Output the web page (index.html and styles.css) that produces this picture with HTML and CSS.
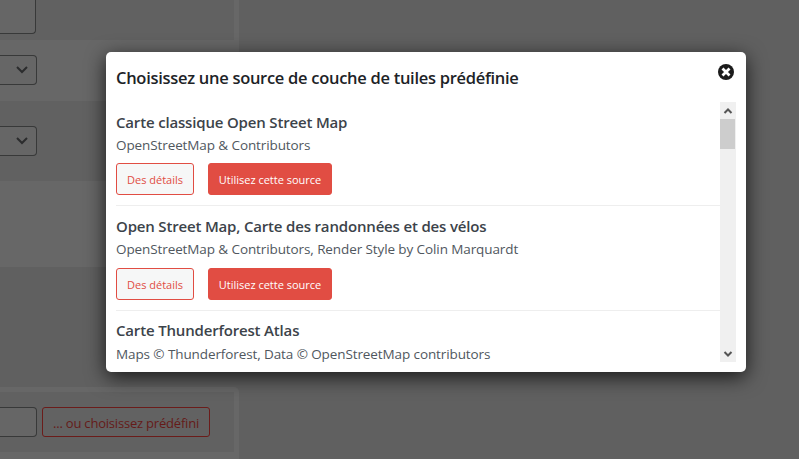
FILE: index.html
```html
<!DOCTYPE html>
<html lang="fr">
<head>
<meta charset="utf-8">
<title>Source de couche de tuiles</title>
<link rel="stylesheet" href="styles.css">
</head>
<body>
<main class="page">
  <section class="card card-fields">
    <div class="row row-first"><div class="field field-text"></div></div>
    <div class="row row-second"><div class="field field-select"><svg class="chevron" viewBox="0 0 12 8"><path d="M1 1l5 5 5-5"/></svg></div></div>
    <div class="row row-third"><div class="field field-select"><svg class="chevron" viewBox="0 0 12 8"><path d="M1 1l5 5 5-5"/></svg></div></div>
    <div class="row row-fourth"></div>
  </section>
  <section class="card card-source">
    <div class="row row-source">
      <div class="field field-source"></div>
      <button class="choose">... ou choisissez prédéfini</button>
    </div>
  </section>
</main>
<div class="modal">
  <header class="modal-head">
    <h1>Choisissez une source de couche de tuiles prédéfinie</h1>
    <svg class="close" viewBox="0 0 16 16"><circle cx="8" cy="8" r="8"/><path d="M4.5 4.5l7 7M11.5 4.5l-7 7"/></svg>
  </header>
  <div class="modal-body">
    <div class="list">
      <article class="item">
        <h2>Carte classique Open Street Map</h2>
        <p>OpenStreetMap &amp; Contributors</p>
        <div class="actions"><button class="btn details">Des détails</button><button class="btn use">Utilisez cette source</button></div>
      </article>
      <article class="item item-second">
        <h2>Open Street Map, Carte des randonnées et des vélos</h2>
        <p>OpenStreetMap &amp; Contributors, Render Style by Colin Marquardt</p>
        <div class="actions"><button class="btn details">Des détails</button><button class="btn use">Utilisez cette source</button></div>
      </article>
      <article class="item item-third">
        <h2>Carte Thunderforest Atlas</h2>
        <p>Maps © Thunderforest, Data © OpenStreetMap contributors</p>
      </article>
    </div>
    <div class="scrollbar">
      <svg class="arrow" viewBox="0 0 16 17"><path d="M4.5 11L8 7.5 11.5 11"/></svg>
      <div class="thumb"></div>
      <svg class="arrow arrow-down" viewBox="0 0 16 17"><path d="M4.5 7L8 10.5 11.5 7"/></svg>
    </div>
  </div>
</div>
</body>
</html>
```
FILE: styles.css
```css
* { box-sizing: border-box; }
body {
  margin: 0;
  height: 459px;
  overflow: hidden;
  background: #606060;
  font-family: "Open Sans", "Noto Sans", sans-serif;
}
h1, h2, p { margin: 0; white-space: nowrap; }
button { font-family: inherit; padding: 0; white-space: nowrap; }

.page { display: flex; flex-direction: column; gap: 120px; }
.card { width: 239px; padding-right: 5px; background: #676767; }
.card-fields { height: 267px; }
.card-source { height: 72px; padding-top: 5px; border-top-right-radius: 5px; }
.row { width: 234px; }
.row-first { height: 40px; background: #616161; }
.row-second { height: 61px; padding-top: 15px; }
.row-third { height: 80px; padding-top: 25px; background: #616161; }
.row-fourth { height: 86px; }
.row-source { display: flex; gap: 5px; height: 60px; padding-top: 15px; background: #616161; }
.field { border: 1px solid #383939; border-left: 0; border-radius: 0 4px 4px 0; background: #666; }
.field-text { width: 36px; height: 34px; border-top: 0; border-top-right-radius: 0; }
.field-select { display: flex; align-items: center; justify-content: flex-end; width: 37px; height: 30px; padding-right: 8px; }
.field-source { width: 37px; height: 30px; }
.chevron { width: 12px; height: 8px; fill: none; stroke: #2b2c2d; stroke-width: 2; }
.choose {
  width: 168px;
  height: 30px;
  border: 1px solid #6b1c1a;
  border-radius: 3px;
  background: #626262;
  color: #651b19;
  font-size: 13px;
  line-height: 30px;
  letter-spacing: -.2px;
}

.modal {
  position: absolute;
  left: 106px;
  top: 52px;
  width: 640px;
  height: 320px;
  padding: 10px;
  border-radius: 5px;
  background: #fff;
  box-shadow: 0 5px 20px rgba(0, 0, 0, .75);
}
.modal-head { display: flex; justify-content: space-between; height: 40px; }
.modal-head h1 { color: #1d2327; font-size: 16.5px; font-weight: 600; line-height: 32px; letter-spacing: -.29px; }
.close { width: 16px; height: 16px; margin: 2px 2px 0 0; fill: #1b1b1b; stroke: #fff; stroke-width: 2.8; }
.close circle { stroke: none; }
.modal-body { display: flex; height: 260px; }
.list { flex: 1; overflow: hidden; }
.item { height: 104px; padding-top: 9px; border-bottom: 1px solid #eee; }
.item h2 { height: 23px; color: #3c434a; font-size: 15px; font-weight: 600; line-height: 23px; letter-spacing: -.17px; }
.item p { height: 23px; color: #50575e; font-size: 13.5px; line-height: 23px; letter-spacing: -.1px; }
.actions { display: flex; gap: 14px; margin-top: 6px; }
.item-second { height: 105px; }
.item-second .actions { margin-top: 7px; }
.item-third { padding-top: 8px; }
.item-third p { margin-top: 1px; }
.btn { height: 32px; border: 1px solid #e14d43; border-radius: 3px; font-size: 11px; line-height: 32px; }
.details { width: 78px; background: #f6f7f7; color: #e14d43; }
.use { width: 124px; background: #e14d43; color: #fff; }
.scrollbar { display: flex; flex-direction: column; width: 16px; background: #f0f0f0; }
.arrow { width: 16px; height: 17px; fill: none; stroke: #555; stroke-width: 2; }
.arrow-down { margin-top: auto; }
.thumb { width: 15px; height: 30px; background: #cdcdcd; }
```
